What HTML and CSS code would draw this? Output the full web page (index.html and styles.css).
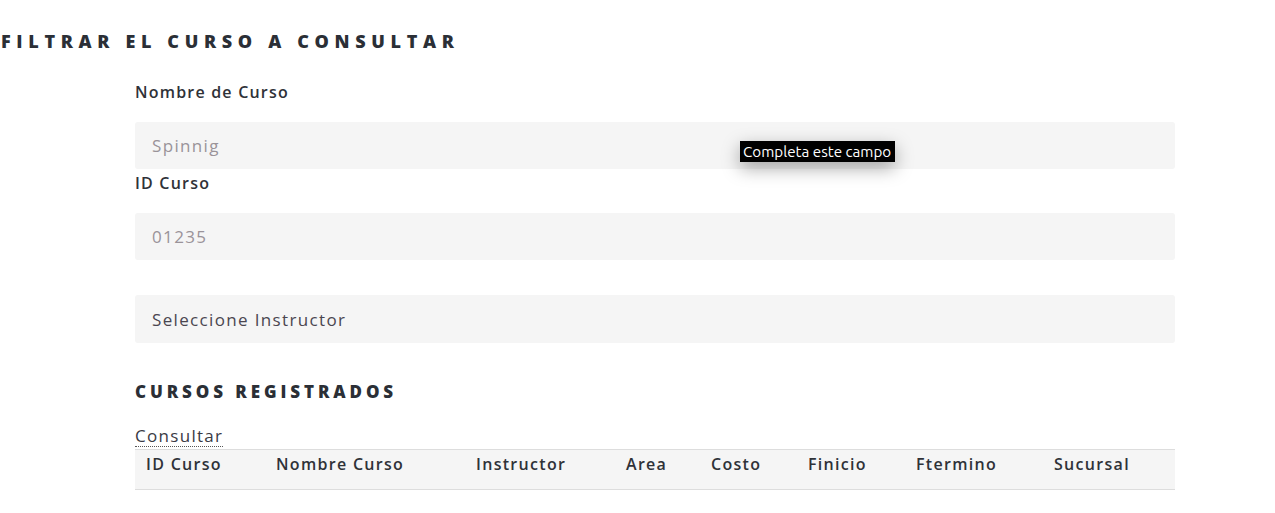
FILE: index.html
```html
<!DOCTYPE html>
<html lang="es">
<head>
<meta charset="utf-8">
<title>Filtrar curso</title>
<link rel="stylesheet" href="styles.css">
</head>
<body>
<h2 class="title">Filtrar el curso a consultar</h2>
<form class="form">
  <label class="label" for="nombre">Nombre de Curso</label>
  <div class="field-wrap">
    <input class="field" id="nombre" type="text" placeholder="Spinnig" required>
    <div class="tooltip">Completa este campo</div>
  </div>
  <label class="label label-tight" for="idc">ID Curso</label>
  <input class="field" id="idc" type="text" placeholder="01235">
  <div class="field select-field">Seleccione Instructor</div>
  <h3 class="subtitle">Cursos registrados</h3>
  <a class="consultar" href="#">Consultar</a>
  <table class="grid">
    <thead>
      <tr>
        <th class="c1">ID Curso</th>
        <th class="c2">Nombre Curso</th>
        <th class="c3">Instructor</th>
        <th class="c4">Area</th>
        <th class="c5">Costo</th>
        <th class="c6">Finicio</th>
        <th class="c7">Ftermino</th>
        <th class="c8">Sucursal</th>
      </tr>
    </thead>
  </table>
</form>
</body>
</html>
```
FILE: styles.css
```css
* { box-sizing: border-box; }
html, body { margin: 0; padding: 0; background: #fff; }
body {
  font-family: "Open Sans", "Liberation Sans", sans-serif;
  color: #333;
  width: 1275px;
  height: 513px;
  overflow: hidden;
}
.title {
  margin: 0;
  padding: 29px 0 0 1px;
  font-size: 18px;
  line-height: 24px;
  font-weight: 800;
  text-transform: uppercase;
  letter-spacing: 5.65px;
  color: #2b2f36;
}
.form {
  margin: 0 0 0 135px;
  width: 1040px;
  display: flex;
  flex-direction: column;
  padding-top: 27px;
}
.label {
  font-size: 16px;
  font-weight: 600;
  letter-spacing: 1.2px;
  line-height: 24px;
  color: #2f3238;
  height: 24px;
  margin-bottom: 18px;
}
.label-tight { margin-bottom: 18px; margin-top: 2px; }
.field-wrap { position: relative; }
.field {
  display: block;
  width: 1040px;
  height: 47px;
  border: none;
  border-radius: 3px;
  background: #f5f5f5;
  padding: 0 17px;
  font-family: "Open Sans", "Liberation Sans", sans-serif;
  font-size: 17px;
  letter-spacing: 1.35px;
  color: #555;
  outline: none;
}
.field::placeholder { color: #9a9399; }
.select-field {
  margin-top: 35px;
  height: 48px;
  line-height: 50px;
  color: #4a4650;
}
.tooltip {
  position: absolute;
  left: 605px;
  top: 19px;
  background: #000;
  color: #fff;
  font-family: "Ubuntu", "DejaVu Sans", "Open Sans", sans-serif;
  font-size: 15.2px;
  line-height: 21px;
  padding: 0 4px 0 3px;
  box-shadow: 0 6px 18px rgba(0,0,0,0.35);
  white-space: nowrap;
}
.subtitle {
  margin: 37px 0 0;
  font-size: 17px;
  line-height: 24px;
  font-weight: 800;
  text-transform: uppercase;
  letter-spacing: 3.9px;
  color: #2b2f36;
}
.consultar {
  align-self: flex-start;
  margin-top: 22px;
  font-size: 17px;
  line-height: 20px;
  letter-spacing: 1.3px;
  color: #3a3a44;
  text-decoration: none;
  border-bottom: 1px dotted #555;
}
.grid {
  width: 1040px;
  border-collapse: collapse;
  table-layout: fixed;
  margin-top: 2px;
}
.grid th {
  background: #f5f5f5;
  border-top: 1px solid #ddd;
  border-bottom: 1px solid #ddd;
  text-align: left;
  font-size: 16px;
  font-weight: 600;
  letter-spacing: 1.3px;
  color: #2f3238;
  height: 40px;
  padding: 0 0 11px 11px;
  line-height: 24px;
  vertical-align: middle;
}
.c1 { width: 130px; }
.c2 { width: 200px; }
.c3 { width: 150px; }
.c4 { width: 85px; }
.c5 { width: 97px; }
.c6 { width: 108px; }
.c7 { width: 138px; }
.c8 { width: 132px; }
```
